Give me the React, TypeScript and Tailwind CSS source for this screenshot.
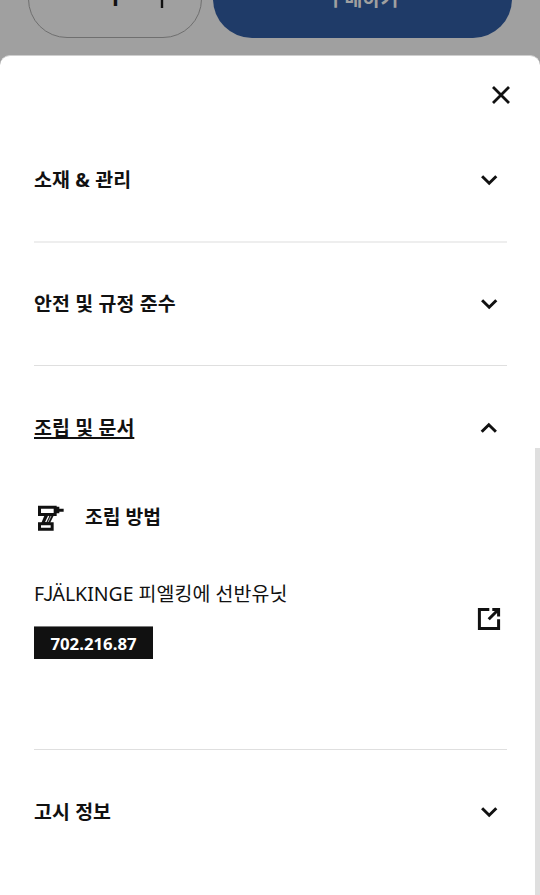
import { useState } from 'react';
import type { ReactNode } from 'react';
import clsx from 'clsx';

interface SectionProps {
  title: string;
  open?: boolean;
  className: string;
  buttonClass: string;
  onToggle: () => void;
  children?: ReactNode;
}

function Chevron({ up }: { up?: boolean }) {
  return (
    <svg className={clsx('w-[18px] h-3 mr-[8.5px]', up && 'rotate-180')} viewBox="0 0 18 12" fill="none">
      <path d="M2.1 2.2 9.2 9.2l7.1-7" stroke="#111111" strokeWidth="3" />
    </svg>
  );
}

function DrillIcon() {
  return (
    <svg className="w-[30px] h-[30px] mb-0.5" viewBox="0 0 90 90" fill="none" stroke="#111111">
      <path d="M16.5 18.5h47v22h-47z" strokeWidth="9" />
      <path d="M66 17h10v20H66zM76 23h13v9H76z" fill="#111111" stroke="none" />
      <path d="M32 42h28L47 68H21z" fill="#111111" stroke="none" />
      <path d="M44 45 35 64" stroke="white" strokeWidth="4" />
      <path d="M51 45 42 64" stroke="white" strokeWidth="2" />
      <path d="M16.5 68.5h38v16h-38z" strokeWidth="9" fill="white" />
    </svg>
  );
}

function ExternalIcon() {
  return (
    <svg className="w-6 h-6 mb-px" viewBox="0 0 24 24" fill="none" stroke="#111111" strokeWidth="3">
      <path d="M12.3 2.5H2.4v18.9h19.2V12.2" />
      <path d="M15.3 2.5h6.3v7M21.2 2.8l-9.5 9.4" />
    </svg>
  );
}

function Section({ title, open, className, buttonClass, onToggle, children }: SectionProps) {
  return (
    <section className={className}>
      <button onClick={onToggle} className={clsx('w-full flex items-center justify-between', buttonClass)}>
        <span
          className={clsx(
            'font-bold [word-spacing:0.4px]',
            open && 'underline decoration-[1.5px] underline-offset-[1.5px]',
          )}
        >
          {title}
        </span>
        <Chevron up={open} />
      </button>
      {open && children}
    </section>
  );
}

export default function App() {
  const [openSection, setOpenSection] = useState('docs');

  const toggle = (id: string) => setOpenSection(openSection === id ? '' : id);

  return (
    <div className="relative w-[540px] h-[895px] overflow-hidden bg-[#a0a0a0] text-[19.45px] leading-7 text-[#111111] font-['Noto_Sans','Noto_Sans_CJK_KR',sans-serif]">
      {/* product page behind the sheet */}
      <div className="flex gap-[11px] pl-7 -mt-[40px] h-[78px]">
        <div className="w-[174px] rounded-full border border-[#6f6f6f] flex items-center">
          <span className="ml-[79px] mb-1 text-[22px] font-bold">1</span>
          <svg className="ml-[31px] mt-0.5 w-5 h-5" viewBox="0 0 20 20" stroke="#111111" strokeWidth="2.4">
            <path d="M10 0v18M1 8h18" />
          </svg>
        </div>
        <div className="w-[299px] rounded-full bg-[#1f3b68] text-[#a0a0a0] font-bold flex items-center justify-center">
          구매하기
        </div>
      </div>

      <div className="mt-[17px] h-[840px] rounded-t-[10px] border-t border-[#cfcfcf] bg-white">
        <div className="h-[61px] flex items-end justify-end pr-[30px]">
          <button className="mb-[13px]">
            <svg className="w-[18px] h-[18px]" viewBox="0 0 18 18" stroke="#111111" strokeWidth="2.8">
              <path d="M1 1l16 16M17 1 1 17" />
            </svg>
          </button>
        </div>

        <div className="pl-[34px] pr-[33.5px]">
          <Section
            title="소재 &amp; 관리"
            className="border-b-2 border-[#eeeeee]"
            buttonClass="h-[124px] pt-0.5"
            open={openSection === 'care'}
            onToggle={() => toggle('care')}
          />
          <Section
            title="안전 및 규정 준수"
            className="border-b border-[#dfdfdf]"
            buttonClass="h-[122px]"
            open={openSection === 'safety'}
            onToggle={() => toggle('safety')}
          />
          <Section
            title="조립 및 문서"
            className="border-b border-[#dfdfdf]"
            buttonClass="h-[122px] pt-0.5"
            open={openSection === 'docs'}
            onToggle={() => toggle('docs')}
          >
            <div className="h-[261px] pt-[14px]">
              <div className="flex items-center gap-[21px] h-[30px]">
                <DrillIcon />
                <h3 className="text-[19.3px] font-bold">조립 방법</h3>
              </div>
              <div className="mt-[47px] flex items-center justify-between pr-[5.5px]">
                <div>
                  <p>
                    F<span className="-ml-px -mr-px font-['Noto_Sans_CJK_KR']">J</span>ÄLKINGE{' '}
                    <span className="tracking-[0.1px]">피엘킹에 선반유닛</span>
                  </p>
                  <span className="mt-[18px] w-[119px] h-[33px] pt-px border-t border-[#7a7a7a] flex items-center justify-center bg-[#111111] text-white text-[16.8px] font-bold">
                    702.216.87
                  </span>
                </div>
                <ExternalIcon />
              </div>
            </div>
          </Section>
          <Section
            title="고시 정보"
            className=""
            buttonClass="h-[122px] pt-px"
            open={openSection === 'notice'}
            onToggle={() => toggle('notice')}
          />
        </div>
      </div>

      <div className="absolute right-0 top-[448px] bottom-0 w-[5.5px] bg-[#dfdfdf]" />
    </div>
  );
}
